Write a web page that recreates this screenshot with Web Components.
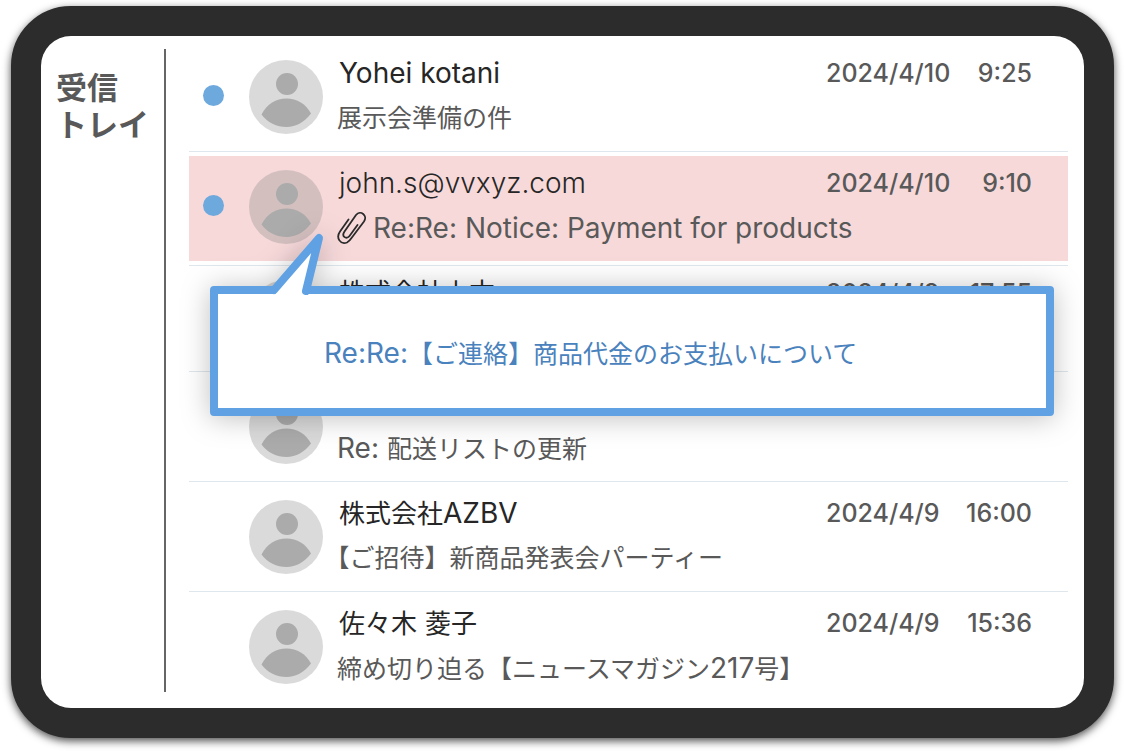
<!DOCTYPE html>
<html lang="ja">
<head>
<meta charset="utf-8">
<meta name="viewport" content="width=device-width, initial-scale=1">
<title>受信トレイ</title>
<style>
  body {
    margin: 0;
    min-height: 100vh;
    box-sizing: border-box;
    padding: 6px 11px 14px;
    display: flex;
    background: #fff;
    font-family: "Inter", "Noto Sans CJK JP", sans-serif;
    color: #595959;
  }
</style>
</head>
<body>
<tablet-frame>
  <inbox-sidebar slot="side">受信<br>トレイ</inbox-sidebar>
  <mail-list>
    <mail-row unread name="Yohei kotani" subject="展示会準備の件" date="2024/4/10" time="9:25"></mail-row>
    <mail-row unread selected attachment name="john.s@vvxyz.com" subject="Re:Re: Notice: Payment for products" date="2024/4/10" time="9:10"></mail-row>
    <mail-row compact name="株式会社山本" subject="" date="2024/4/9" time="17:55"></mail-row>
    <mail-row name="" subject="Re: 配送リストの更新" date="" time=""></mail-row>
    <mail-row name="株式会社AZBV" subject="【ご招待】新商品発表会パーティー" date="2024/4/9" time="16:00"></mail-row>
    <mail-row last name="佐々木 菱子" subject="締め切り迫る【ニュースマガジン217号】" date="2024/4/9" time="15:36"></mail-row>
    <subject-callout slot="overlay" text="Re:Re:【ご連絡】商品代金のお支払いについて"></subject-callout>
  </mail-list>
</tablet-frame>

<script>
const define = (name, html, setup) => {
  const template = document.createElement('template');
  template.innerHTML = html;
  customElements.define(name, class extends HTMLElement {
    constructor() {
      super();
      this.attachShadow({ mode: 'open' }).append(template.content.cloneNode(true));
    }
    connectedCallback() {
      if (setup) setup(this, this.shadowRoot);
    }
  });
};

// Latin runs are set larger than the Japanese text next to them.
const fillMixed = (target, text) => {
  target.replaceChildren(...(text.match(/[ -~]+|[^ -~]+/g) || []).map(run => {
    if (!/[!-~]/.test(run) && run !== ' ') return document.createTextNode(run);
    const span = document.createElement('span');
    span.className = 'latin';
    span.textContent = run;
    return span;
  }));
};

define('tablet-frame', `
  <style>
    :host { display: flex; flex: 1; min-width: 0; box-sizing: border-box; border: 30px solid #2c2c2c;
      border-radius: 60px; background: #2c2c2c; box-shadow: 0 3px 8px rgba(0,0,0,.7); }
    main { flex: 1; min-width: 0; display: flex; gap: 23px; padding: 6px 16px 16px 0; background: #fff;
      border-radius: 30px; overflow: hidden; }
  </style>
  <main><slot name="side"></slot><slot></slot></main>`);

define('inbox-sidebar', `
  <style>
    :host { display: block; flex: none; width: 108px; margin-top: 7px; padding-left: 15px;
      border-right: 2px solid #666; }
    h1 { margin: 20px 0 0; font-size: 31px; line-height: 37px; font-weight: 700; white-space: nowrap; }
  </style>
  <h1><slot></slot></h1>`);

define('mail-list', `
  <style>
    :host { display: block; flex: 1; min-width: 0; position: relative; }
  </style>
  <section aria-label="メール一覧"><slot></slot></section>
  <slot name="overlay"></slot>`);

define('user-avatar', `
  <style>
    :host { display: block; flex: none; width: 74px; height: 74px; }
    svg { display: block; width: 100%; height: 100%; }
  </style>
  <svg viewBox="0 0 74 74" aria-hidden="true">
    <circle cx="37" cy="37" r="37" fill="#808080" fill-opacity=".29"/>
    <circle cx="38" cy="24" r="11" fill="#ababab"/>
    <path d="M12.500 54.500C18 44 27 38.500 37.500 38.500S57 44 62 53.500C55.500 62 47 67 37.500 67S18 62.500 12.500 54.500Z" fill="#ababab"/>
  </svg>`);

define('clip-icon', `
  <style>
    :host { display: block; flex: none; width: 30px; height: 34px; white-space: normal; }
    svg { display: block; }
  </style>
  <svg width="30" height="34" viewBox="0 0 30 34" fill="none" stroke="#2b2b2b" stroke-width="1.800" stroke-linecap="round" stroke-linejoin="round" aria-hidden="true">
    <path d="M11.500 8.500L3 20.500C-1.500 27 3.500 34 10 31.500C12 30.500 13.500 28.500 14.500 27L27 10.500C31 4.500 23.500-1.500 19 4L7.500 20.500C4 25.500 9.500 29 12.500 25L20.500 14"/>
  </svg>`);

define('mail-row', `
  <style>
    :host { display: block; border-bottom: 1px solid #dfe7ed; }
    :host([last]) { border-bottom: 0; }
    article { display: flex; align-items: flex-end; padding: 15px 36px 17px 14px; }
    :host([selected]) article { margin: 4px 0; padding-top: 11px; background: #f7d9da; }
    :host([compact]) article { padding-top: 11px; }
    :host([last]) article { padding-bottom: 0; }
    .dot { flex: none; align-self: center; width: 21px; height: 21px; margin-right: 25px; border-radius: 50%; }
    :host([unread]) .dot { background: #6ea9de; }
    .text { flex: 1; min-width: 0; margin-left: 14px; display: grid; gap: 13px; }
    .head, .line { display: flex; align-items: center; justify-content: space-between; height: 32px; white-space: pre; }
    .line { justify-content: flex-start; gap: 6px; }
    h2, p { margin: 0; line-height: 32px; font-weight: 400; }
    h2 { padding-left: 2px; font-size: 26px; color: #262626; }
    p { font-size: 25px; text-spacing-trim: trim-start; }
    .latin { font-size: 28px; line-height: 32px; }
    :host([selected]) h2 { font-weight: 300; }
    time { display: flex; justify-content: space-between; width: 206px; font-size: 25px; line-height: 32px; font-weight: 500; }
  </style>
  <article>
    <span class="dot"></span>
    <user-avatar></user-avatar>
    <div class="text">
      <div class="head"><h2></h2><time><span class="date"></span><span class="clock"></span></time></div>
      <div class="line"><p></p></div>
    </div>
  </article>`,
  (host, root) => {
    const attr = key => host.getAttribute(key) || '';
    fillMixed(root.querySelector('h2'), attr('name'));
    fillMixed(root.querySelector('p'), attr('subject'));
    root.querySelector('.date').textContent = attr('date');
    root.querySelector('.clock').textContent = attr('time');
    if (host.hasAttribute('attachment')) root.querySelector('.line').prepend(document.createElement('clip-icon'));
  });

define('subject-callout', `
  <style>
    :host { position: absolute; top: 244px; left: 21px; right: 14px; filter: drop-shadow(0 2px 14px rgba(0,0,0,.25)); }
    div { box-sizing: border-box; padding: 42px 106px 37px; border: 8px solid #60a1e4; border-radius: 4px; background: #fff; }
    p { margin: 0; font-size: 25px; line-height: 34px; color: #4a82bd; white-space: nowrap; }
    .latin { font-size: 28px; line-height: 34px; }
    svg { position: absolute; left: 50px; top: -60px; }
  </style>
  <div role="tooltip"><p></p></div>
  <svg width="70" height="70" viewBox="260 226 70 70" aria-hidden="true">
    <path d="M275 295L277 290L319 238L306 291V295Z" fill="#fff"/>
    <path d="M274 290L319 238L306 291" fill="none" stroke="#60a1e4" stroke-width="8" stroke-linejoin="round" stroke-linecap="round"/>
  </svg>`,
  (host, root) => fillMixed(root.querySelector('p'), host.getAttribute('text')));
</script>
</body>
</html>
